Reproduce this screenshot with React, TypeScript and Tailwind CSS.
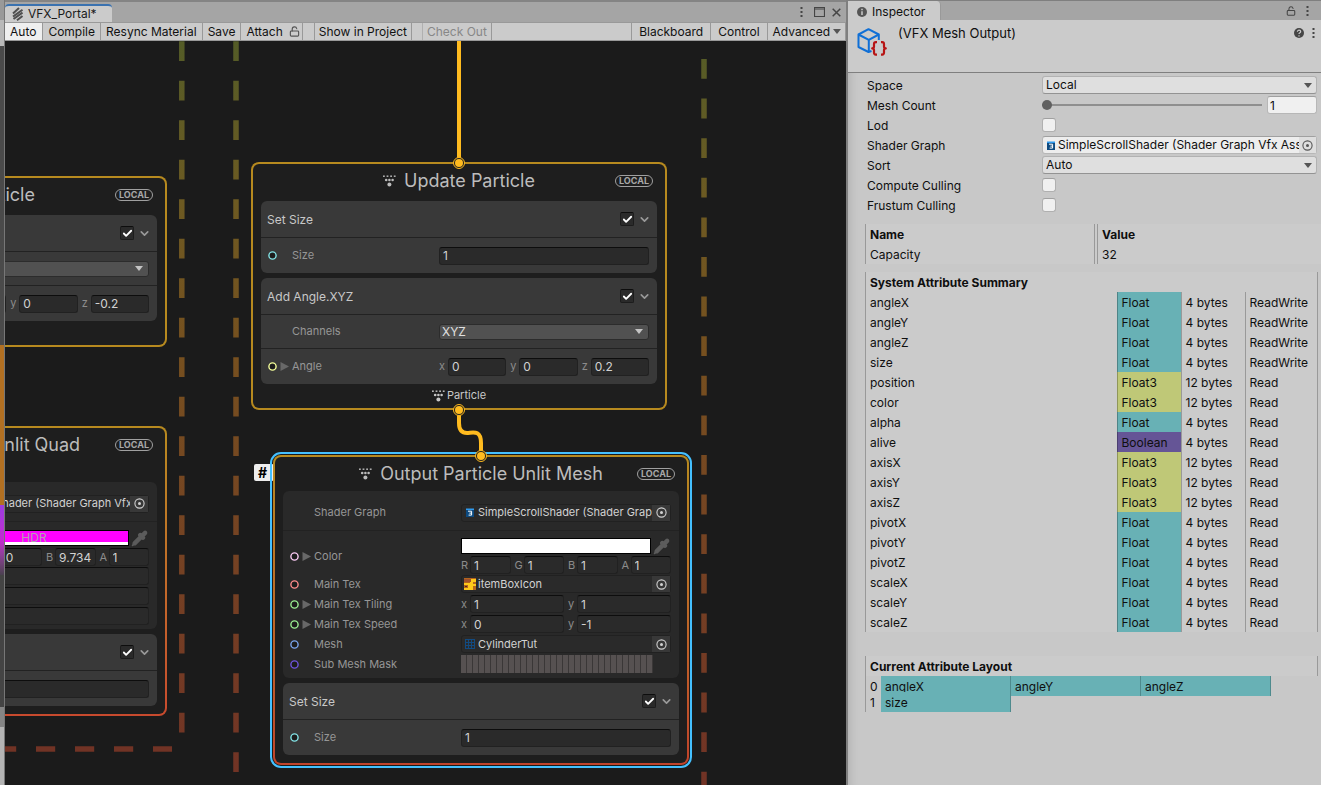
import { useState } from "react";
import { Check, ChevronDown, LockOpen, Pipette } from "lucide-react";

type BlockTone = "light" | "dark";

// ── Icons ─────────────────────────────────────────────────────
function ParticleIcon() {
  return (
    <svg width="13" height="12" viewBox="0 0 13 12" fill="currentColor" className="shrink-0">
      <rect x="0" y="0.5" width="1.8" height="1.4" />
      <rect x="3.6" y="0.5" width="1.8" height="1.4" />
      <rect x="7.2" y="0.5" width="1.8" height="1.4" />
      <rect x="10.8" y="0.5" width="1.8" height="1.4" />
      <circle cx="3.2" cy="5" r="1.3" />
      <circle cx="6.4" cy="5" r="1.3" />
      <circle cx="9.6" cy="5" r="1.3" />
      <circle cx="6.4" cy="9.6" r="2" />
    </svg>
  );
}

function EffectIcon() {
  return (
    <svg width="12" height="14" viewBox="0 0 12 14" stroke="#4f4f4f" strokeWidth="2" fill="none">
      <path d="M1 6.5 7 1" />
      <path d="M1 9.6 10.5 2.8" />
      <path d="M1.5 12 10.5 5.6" />
      <path d="M5 13.2 10.5 9" />
    </svg>
  );
}

function MeshOutputIcon() {
  return (
    <svg width="30" height="30" viewBox="0 0 30 30" fill="none" strokeLinejoin="round">
      <path d="M14.5 24 11.5 25 1.5 20V7.5L11.5 2.2 21.8 7.5V13" stroke="#0f6fd6" strokeWidth="2" />
      <path d="M1.5 7.5 11.8 12.8 21.8 7.5M11.8 12.8V25" stroke="#0f6fd6" strokeWidth="2" />
      <path
        d="M20 15.2h-1.2c-1.3 0-1.8.8-1.8 2v2.4c0 1-.6 1.8-1.8 1.8 1.2 0 1.8.8 1.8 1.8v2.4c0 1.2.5 2 1.8 2H20M24 15.2h1.2c1.3 0 1.8.8 1.8 2v2.4c0 1 .6 1.8 1.8 1.8-1.2 0-1.8.8-1.8 1.8v2.4c0 1.2-.5 2-1.8 2H24"
        stroke="#b71515"
        strokeWidth="2.2"
      />
    </svg>
  );
}

function ShaderIcon() {
  return (
    <svg width="8" height="9" viewBox="0 0 8 9" className="shrink-0">
      <rect x="0" y="1" width="8" height="8" fill="#0d4a80" />
      <rect x="0" y="0.5" width="8" height="1.5" fill="#2f9bf0" />
      <path d="M2 3.2h3.6v3.9H2.6M3.4 5.1h2.2" stroke="#fff" strokeWidth="1" fill="none" />
    </svg>
  );
}

function TextureIcon() {
  return (
    <svg width="12" height="12" viewBox="0 0 12 12" className="shrink-0">
      <rect width="12" height="12" fill="#b5651d" />
      <rect y="1" width="7" height="3" fill="#a0522d" />
      <path d="M0 5h6v2H0zM0 10h7v2H0zM7 1h5v3H9v2h3v2H9v4H6V4h1zM4 7h2v3H4z" fill="#ffc91a" />
      <path d="M1 8h2v1H1z" fill="#5a2a10" />
    </svg>
  );
}

function MeshIcon() {
  return (
    <svg width="10" height="10" viewBox="0 0 10 10" stroke="#124a80" strokeWidth="1" className="shrink-0">
      <path d="M.5 0v10M3.5 0v10M6.5 0v10M9.5 0v10M0 .5h10M0 3.5h10M0 6.5h10M0 9.5h10" />
    </svg>
  );
}

function PickerIcon() {
  return (
    <svg width="11" height="11" viewBox="0 0 11 11">
      <circle cx="5.5" cy="5.5" r="4.6" fill="none" stroke="currentColor" strokeWidth="1.1" />
      <circle cx="5.5" cy="5.5" r="1.5" fill="currentColor" />
    </svg>
  );
}

function DownArrow() {
  return (
    <svg width="8" height="5" viewBox="0 0 8 5" fill="currentColor">
      <path d="M0 0h8L4 5z" />
    </svg>
  );
}

function MoreIcon() {
  return (
    <svg width="3" height="10" viewBox="0 0 3 10" fill="#454545">
      <rect x="0.5" y="0" width="2" height="2" />
      <rect x="0.5" y="4" width="2" height="2" />
      <rect x="0.5" y="8" width="2" height="2" />
    </svg>
  );
}

// ── Node controls ─────────────────────────────────────────────
const fieldCls =
  "block h-[18px] w-full min-w-0 rounded-[3px] border border-[#212121] border-t-[#0d0d0d] bg-[#2a2a2a] px-[3px] text-xs text-[#d2d2d2] outline-none focus:border-[#3a79bb]";

function NumberField({ label, axis, value }: { label: string; axis?: string; value: string }) {
  const [text, setText] = useState(value);
  return (
    <label className="flex min-w-0 flex-1 items-center gap-px">
      {axis && <span className="min-w-2 shrink-0 text-[11px] text-[#8c8c8c]">{axis}</span>}
      <input aria-label={label} className={fieldCls} value={text} onChange={(e) => setText(e.target.value)} />
    </label>
  );
}

function VectorField({ label, axes, values }: { label: string; axes: string[]; values: string[] }) {
  return (
    <div className="flex gap-1">
      {axes.map((axis, i) => (
        <NumberField key={axis} label={`${label} ${axis}`} axis={axis} value={values[i]} />
      ))}
    </div>
  );
}

function ObjectField({ label, name, icon }: { label: string; name: string; icon: React.ReactNode }) {
  return (
    <div className="flex h-[18px] items-center rounded-[3px] border border-[#212121] bg-[#2a2a2a] pl-0.5 text-[#d2d2d2]">
      <span className="flex w-3 shrink-0 justify-center">{icon}</span>
      <span className="ml-0.5 min-w-0 flex-1 overflow-hidden whitespace-nowrap text-[11px]">{name}</span>
      <button
        aria-label={`Pick ${label}`}
        className="flex h-4 w-[18px] shrink-0 items-center justify-center bg-[#383838]"
      >
        <PickerIcon />
      </button>
    </div>
  );
}

function ColorField({ values, hdr }: { values: string[]; hdr?: boolean }) {
  return (
    <div>
      <div className="flex h-[18px] items-start justify-between">
        <button
          aria-label="Color swatch"
          className={
            "h-4 w-[190px] overflow-hidden border border-black text-center text-xs leading-[14px] text-[#b4a0b4] " +
            (hdr ? "bg-[#ff00ff] shadow-[inset_0_-3px_0_#fff]" : "bg-white")
          }
        >
          {hdr ? "HDR" : ""}
        </button>
        <button aria-label="Pick color" className="pr-px text-[#5c5c5c]">
          <Pipette size={17} fill="currentColor" strokeWidth={2} />
        </button>
      </div>
      <VectorField label="Color" axes={["R", "G", "B", "A"]} values={values} />
    </div>
  );
}

function MaskField() {
  return (
    <div className="flex h-[18px] w-48">
      {Array.from({ length: 32 }, (_, i) => (
        <span key={i} className="flex-1 border-r border-[#3a3737] bg-[#565151]" />
      ))}
    </div>
  );
}

function ChannelSelect() {
  return (
    <div className="grid items-center">
      <select
        aria-label="Channels"
        className="col-start-1 row-start-1 h-4 appearance-none rounded-[3px] border border-[#2c2c2c] bg-[#515151] px-0.5 text-xs leading-none text-[#e0e0e0] outline-none"
      >
        <option>XYZ</option>
        <option>XY</option>
      </select>
      <span className="pointer-events-none col-start-1 row-start-1 mr-1.5 justify-self-end text-[#c4c4c4]">
        <DownArrow />
      </span>
    </div>
  );
}

interface RowProps {
  label: string;
  port?: string;
  foldout?: boolean;
  className?: string;
  children: React.ReactNode;
}

function Row({ label, port, foldout, className = "h-5", children }: RowProps) {
  return (
    <div className={`flex items-center pr-2 pl-[7px] ${className}`}>
      <div className="flex w-[171px] shrink-0 items-center text-[11px] text-[#969696]">
        <span className="w-3">
          {port && (
            <svg width="9" height="9" viewBox="0 0 9 9" className="block">
              <circle cx="4.5" cy="4.5" r="3.6" fill="#1c1c1c" stroke={port} strokeWidth="1.4" />
            </svg>
          )}
        </span>
        <span className="w-3">
          {foldout && (
            <svg width="9" height="9" viewBox="0 0 9 9" fill="#686868" className="block">
              <path d="M.5 0v9l8.500-4.500z" />
            </svg>
          )}
        </span>
        {label}
      </div>
      <div className="min-w-0 flex-1">{children}</div>
    </div>
  );
}

function Block({ title, tone = "light", children }: { title?: string; tone?: BlockTone; children: React.ReactNode }) {
  const [on, setOn] = useState(true);
  return (
    <section
      className={
        "divide-y divide-[#222222] rounded-md " + (tone === "light" ? "bg-[#393939]" : "bg-[#292929]")
      }
    >
      {title && (
        <header className="flex h-[37px] items-center gap-1 px-1.5 text-xs text-[#c8c8c8]">
          <h3 className="flex-1 pt-0.5">{title}</h3>
          <span className="grid place-items-center">
            <input
              type="checkbox"
              aria-label={`Enable ${title}`}
              checked={on}
              onChange={() => setOn(!on)}
              className="col-start-1 row-start-1 size-3.5 appearance-none rounded-[2px] border border-[#1c1c1c] border-t-[#0d0d0d] bg-[#2a2a2a]"
            />
            {on && (
              <Check size={11} strokeWidth={4} className="pointer-events-none col-start-1 row-start-1 text-white" />
            )}
          </span>
          <button aria-label={`Collapse ${title}`} className="text-[#9a9a9a]">
            <ChevronDown size={13} strokeWidth={3} />
          </button>
        </header>
      )}
      {children}
    </section>
  );
}

interface NodeProps {
  title: string;
  className: string;
  headerCls?: string;
  output?: string;
  children: React.ReactNode;
}

function ContextNode({ title, className, headerCls = "h-[34px]", output, children }: NodeProps) {
  return (
    <article className={`absolute w-[416px] rounded-lg p-0.5 ${className}`}>
      <div className="rounded-md bg-[#1e1e1e] px-2 pb-2">
        <header className={`relative flex items-start justify-center ${headerCls}`}>
          <h2 className="flex h-[34px] items-center gap-2 text-lg text-[#bcbcbc]">
            <ParticleIcon />
            {title}
          </h2>
          <span className="absolute top-[11px] right-1 flex h-3 w-[38px] items-center justify-center rounded-full border border-[#a0a0a0] text-[9px] font-bold text-[#a8a8a8]">
            LOCAL
          </span>
        </header>
        <div className="flex flex-col gap-[5px]">{children}</div>
        {output && (
          <footer className="-mb-0.5 flex h-[18px] items-end justify-center gap-0.5 text-[11px] leading-[14px] text-[#c8c8c8]">
            <ParticleIcon />
            {output}
          </footer>
        )}
      </div>
    </article>
  );
}

// ── Graph canvas ──────────────────────────────────────────────
function SystemBorders() {
  return (
    <svg className="pointer-events-none absolute inset-0 size-full">
      <defs>
        <linearGradient id="systemBorder" gradientUnits="userSpaceOnUse" x1="0" y1="0" x2="0" y2="735">
          <stop offset="0" stopColor="#545c27" />
          <stop offset="0.22" stopColor="#6d5a22" />
          <stop offset="0.42" stopColor="#76501f" />
          <stop offset="0.7" stopColor="#754223" />
          <stop offset="1" stopColor="#713325" />
        </linearGradient>
      </defs>
      <g fill="none" stroke="url(#systemBorder)" strokeWidth="5.5" strokeDasharray="19.7 19.8">
        <path d="M176.8 0.2V693" />
        <path d="M231 0.2V740" />
        <path d="M699 18V744" strokeDasharray="19.8 19.8" />
      </g>
      <path d="M-8 708H167" stroke="#713325" strokeWidth="5.5" strokeDasharray="19.2 19.8" />
    </svg>
  );
}

function FlowPort({ x, y }: { x: number; y: number }) {
  return (
    <g>
      <circle cx={x} cy={y} r="5.5" fill="#1e1e1e" stroke="#ffbb1f" strokeWidth="1" />
      <circle cx={x} cy={y} r="4" fill="#ffbb1f" />
    </g>
  );
}

function FlowEdges() {
  return (
    <svg className="pointer-events-none absolute inset-0 size-full">
      <g fill="none" stroke="#ffbb1f" strokeWidth="4">
        <path d="M454 0V122" />
        <path d="M454 369V382C454 389 457 392 462 392S476 388 476 402V414" />
      </g>
      <FlowPort x={454} y={122} />
      <FlowPort x={454} y={369} />
      <FlowPort x={476} y={415} />
    </svg>
  );
}

function AngleBlock({ z }: { z: string }) {
  return (
    <Block title="Add Angle.XYZ">
      <Row label="Channels" className="h-[34px]">
        <ChannelSelect />
      </Row>
      <Row label="Angle" port="#f6ff9a" foldout className="h-[35px]">
        <VectorField label="Angle" axes={["x", "y", "z"]} values={["0", "0", z]} />
      </Row>
    </Block>
  );
}

function SizeBlock({ value }: { value: string }) {
  return (
    <Block title="Set Size">
      <Row label="Size" port="#84e4e7" className="h-[35px]">
        <NumberField label="Size" value={value} />
      </Row>
    </Block>
  );
}

function GraphCanvas() {
  return (
    <main className="relative flex-1 overflow-hidden bg-[#1b1b1b]">
      <SystemBorders />

      <ContextNode
        title="Update Particle"
        className="top-[135px] left-[-254px] bg-[#b78a1f]"
        headerCls="h-[37px]"
        output="Particle"
      >
        <AngleBlock z="-0.2" />
      </ContextNode>

      <ContextNode
        title="Output Particle Unlit Quad"
        className="top-[385px] left-[-254px] bg-linear-to-b from-[#b78a1f] to-[#c84a2e]"
        headerCls="h-[54px]"
      >
        <Block tone="dark">
          <Row label="Shader Graph" className="h-10 pt-1">
            <ObjectField label="Shader Graph" name="ParticleShader (Shader Graph Vfx Asset)" icon={<ShaderIcon />} />
          </Row>
          <div className="pt-2 pb-[3px]">
            <Row label="Color" port="#fbcbf4" foldout className="h-9">
              <ColorField hdr values={["9.734", "0", "9.734", "1"]} />
            </Row>
            <Row label="Alpha" port="#84e4e7">
              <NumberField label="Alpha" value="" />
            </Row>
            <Row label="Speed" port="#84e4e7">
              <NumberField label="Speed" value="" />
            </Row>
            <Row label="Scale" port="#84e4e7">
              <NumberField label="Scale" value="" />
            </Row>
          </div>
        </Block>
        <SizeBlock value="" />
      </ContextNode>

      <ContextNode
        title="Update Particle"
        className="top-[121px] left-[246px] bg-[#b78a1f]"
        headerCls="h-[37px]"
        output="Particle"
      >
        <SizeBlock value="1" />
        <AngleBlock z="0.2" />
      </ContextNode>

      <div className="absolute top-[423px] left-[249px] flex h-[17px] w-5 items-center rounded-[2px] bg-[#eeeeee] pl-1 text-sm font-bold text-black">
        #
      </div>
      <ContextNode
        title="Output Particle Unlit Mesh"
        className="top-[414px] left-[268px] bg-linear-to-b from-[#b78a1f] to-[#c0432b] outline-2 outline-offset-1 outline-[#44c0ff]"
      >
        <Block tone="dark">
          <Row label="Shader Graph" className="h-10 pt-1">
            <ObjectField label="Shader Graph" name="SimpleScrollShader (Shader Graph Vfx Asset)" icon={<ShaderIcon />} />
          </Row>
          <div className="pt-[7px] pb-1">
            <Row label="Color" port="#fbcbf4" foldout className="h-9">
              <ColorField values={["1", "1", "1", "1"]} />
            </Row>
            <Row label="Main Tex" port="#ff8b8b">
              <ObjectField label="Main Tex" name="itemBoxIcon" icon={<TextureIcon />} />
            </Row>
            <Row label="Main Tex Tiling" port="#9aef92" foldout>
              <VectorField label="Main Tex Tiling" axes={["x", "y"]} values={["1", "1"]} />
            </Row>
            <Row label="Main Tex Speed" port="#9aef92" foldout>
              <VectorField label="Main Tex Speed" axes={["x", "y"]} values={["0", "-1"]} />
            </Row>
            <Row label="Mesh" port="#7aa5ee">
              <ObjectField label="Mesh" name="CylinderTut" icon={<MeshIcon />} />
            </Row>
            <Row label="Sub Mesh Mask" port="#6e55e0">
              <MaskField />
            </Row>
          </div>
        </Block>
        <SizeBlock value="1" />
      </ContextNode>

      <FlowEdges />
    </main>
  );
}

// ── Graph window chrome ───────────────────────────────────────
const toolCls = "flex items-center whitespace-nowrap border-r border-[#999999] hover:bg-[#dadada]";

function GraphWindow() {
  return (
    <div className="flex min-w-0 flex-1 flex-col border-t-2 border-[#848484] bg-[#a5a5a5]">
      <div className="flex h-5 items-end justify-between">
        <div className="flex h-[18px] w-[107px] items-center gap-1 rounded-t-sm border-t-2 border-[#3a72b0] bg-[#cbcbcb] pl-[7px] text-xs text-[#1a1a1a]">
          <EffectIcon />
          VFX_Portal*
        </div>
        <div className="flex h-5 items-center gap-[7px] pr-[5px]">
          <button aria-label="Window menu" className="mr-1">
            <MoreIcon />
          </button>
          <button aria-label="Maximize">
            <svg width="11" height="10" viewBox="0 0 11 10" className="block">
              <path d="M.5.5h10v9H.5zM.5 2h10" fill="none" stroke="#454545" strokeWidth="1.2" />
            </svg>
          </button>
          <button aria-label="Close">
            <svg width="9" height="9" viewBox="0 0 9 9" className="block">
              <path d="M.7.7 8.3 8.3M8.3.7.7 8.3" stroke="#454545" strokeWidth="1.5" />
            </svg>
          </button>
        </div>
      </div>
      <nav className="flex h-[19px] items-stretch border-y border-[#999999] bg-[#cbcbcb] text-xs text-[#111111]">
        <button className={`${toolCls} bg-[#efefef] px-[5px] pr-[6px]`}>Auto</button>
        <button className={`${toolCls} px-[5px]`}>Compile</button>
        <button className={`${toolCls} px-[5px]`}>Resync Material</button>
        <button className={`${toolCls} px-[5px]`}>Save</button>
        <button className={`${toolCls} gap-1.5 pr-0.5 pl-[5px]`}>
          Attach <LockOpen size={11} strokeWidth={2.5} className="text-[#555555]" />
        </button>
        <span className="w-3 border-r border-[#999999]" />
        <button className={`${toolCls} px-1`}>Show in Project</button>
        <span className="w-[11px] border-r border-[#b0b0b0]" />
        <button className={`${toolCls} px-1 text-[#878787]`} disabled>
          Check Out
        </button>
        <span className="flex-1 border-r border-[#999999]" />
        <button className={`${toolCls} px-[7px]`}>Blackboard</button>
        <button className={`${toolCls} px-[7px]`}>Control</button>
        <button className={`${toolCls} gap-[3px] pr-1 pl-[5px]`}>
          Advanced
          <span className="text-[#555555]">
            <DownArrow />
          </span>
        </button>
      </nav>
      <GraphCanvas />
    </div>
  );
}

// Sliver of the window docked behind the graph
function BackgroundWindow() {
  return (
    <div className="flex w-[5px] shrink-0 flex-col border-r border-[#777777] bg-[#444444]">
      <div className="h-5 bg-[#999999]" />
      <div className="h-[26px] bg-[#b9b9b9]" />
      <div className="h-[299px] bg-[#4a4a4a]" />
      <div className="h-40 bg-[#b27022]" />
      <div className="h-[70px] bg-linear-to-b from-[#9a3be0] via-[#c32ad0] to-[#4a4050]" />
      <div className="h-[132px]" />
      <div className="h-5 bg-[#858585]" />
      <div className="flex-1 bg-[#b4b4b4]" />
    </div>
  );
}

// ── Inspector ─────────────────────────────────────────────────
const attributes = [
  ["angleX", "Float", "4 bytes", "ReadWrite"],
  ["angleY", "Float", "4 bytes", "ReadWrite"],
  ["angleZ", "Float", "4 bytes", "ReadWrite"],
  ["size", "Float", "4 bytes", "ReadWrite"],
  ["position", "Float3", "12 bytes", "Read"],
  ["color", "Float3", "12 bytes", "Read"],
  ["alpha", "Float", "4 bytes", "Read"],
  ["alive", "Boolean", "4 bytes", "Read"],
  ["axisX", "Float3", "12 bytes", "Read"],
  ["axisY", "Float3", "12 bytes", "Read"],
  ["axisZ", "Float3", "12 bytes", "Read"],
  ["pivotX", "Float", "4 bytes", "Read"],
  ["pivotY", "Float", "4 bytes", "Read"],
  ["pivotZ", "Float", "4 bytes", "Read"],
  ["scaleX", "Float", "4 bytes", "Read"],
  ["scaleY", "Float", "4 bytes", "Read"],
  ["scaleZ", "Float", "4 bytes", "Read"],
];

const typeColors: Record<string, string> = {
  Float: "bg-[#68b1b5]",
  Float3: "bg-[#bfc877]",
  Boolean: "bg-[#655596]",
};

function Property({ label, id, children }: { label: string; id: string; children: React.ReactNode }) {
  return (
    <div className="flex h-5 items-center">
      <label htmlFor={id} className="w-[175px] shrink-0">
        {label}
      </label>
      <div className="flex min-w-0 flex-1 items-center pb-0.5">{children}</div>
    </div>
  );
}

function PropertySelect({ id, options }: { id: string; options: string[] }) {
  return (
    <div className="grid flex-1 items-center">
      <select
        id={id}
        className="col-start-1 row-start-1 h-[18px] appearance-none rounded-[3px] border border-[#b2b2b2] border-b-[#939393] bg-[#dfdfdf] px-[3px] text-xs outline-none"
      >
        {options.map((o) => (
          <option key={o}>{o}</option>
        ))}
      </select>
      <span className="pointer-events-none col-start-1 row-start-1 mr-[5px] justify-self-end text-[#555555]">
        <DownArrow />
      </span>
    </div>
  );
}

function PropertyCheck({ id }: { id: string }) {
  return (
    <input
      id={id}
      type="checkbox"
      className="size-3.5 appearance-none rounded-[3px] border border-[#b0b0b0] border-t-[#a0a0a0] bg-[#f0f0f0] checked:bg-[#555555]"
    />
  );
}

const cellCls = "p-0 pt-0.5 pl-1 leading-[18px]";

function Inspector() {
  const [count, setCount] = useState("1");
  return (
    <aside className="flex w-[475px] shrink-0 flex-col border-t border-l-2 border-[#7f7f7f] bg-[#c8c8c8] text-xs text-[#0f0f0f]">
      <div className="flex h-[19px] items-stretch justify-between bg-[#a5a5a5]">
        <div className="flex w-[93px] items-center gap-[5px] rounded-tr-sm border-r border-[#999999] bg-[#cbcbcb] pt-0.5 pl-[9px]">
          <svg width="10" height="10" viewBox="0 0 10 10">
            <circle cx="5" cy="5" r="5" fill="#555555" />
            <path d="M5 4.2V8M5 1.8v1.4" stroke="#cbcbcb" strokeWidth="1.5" />
          </svg>
          Inspector
        </div>
        <div className="flex items-center gap-2.5 pr-3 text-[#454545]">
          <button aria-label="Lock">
            <LockOpen size={10} strokeWidth={2.5} />
          </button>
          <button aria-label="Inspector menu">
            <MoreIcon />
          </button>
        </div>
      </div>

      <header className="flex h-[53px] items-start border-b border-[#7f7f7f] bg-[#cbcbcb] pt-[7px] pr-1.5 pl-[9px]">
        <MeshOutputIcon />
        <h1 className="ml-[11px] flex-1 text-[13px] leading-3">(VFX Mesh Output)</h1>
        <div className="flex items-center gap-2 pt-px">
          <button aria-label="Help">
            <svg width="10" height="10" viewBox="0 0 10 10" className="block">
              <circle cx="5" cy="5" r="5" fill="#454545" />
              <path d="M3.4 3.8c0-2.2 3.3-2 3.3-.1C6.7 4.9 5 4.7 5 6M5 7.2v1.2" stroke="#cbcbcb" strokeWidth="1.2" fill="none" />
            </svg>
          </button>
          <button aria-label="Component menu">
            <MoreIcon />
          </button>
        </div>
      </header>

      <div className="flex-1 pt-[3px] pl-[17px] shadow-[inset_10px_0_8px_-8px_rgba(0,0,0,0.12)]">
        <div className="pr-1 pl-[2px]">
          <Property label="Space" id="space">
            <PropertySelect id="space" options={["Local", "World"]} />
          </Property>
          <Property label="Mesh Count" id="meshCount">
            <input
              id="meshCount"
              type="range"
              min="1"
              max="4"
              value={count}
              onChange={(e) => setCount(e.target.value)}
              className="h-0.5 min-w-0 flex-1 appearance-none bg-[#8f8f8f] [&::-webkit-slider-thumb]:size-2.5 [&::-webkit-slider-thumb]:appearance-none [&::-webkit-slider-thumb]:rounded-full [&::-webkit-slider-thumb]:bg-[#606060]"
            />
            <input
              aria-label="Mesh Count value"
              value={count}
              onChange={(e) => setCount(e.target.value)}
              className="ml-[5px] h-[18px] w-[50px] rounded-[3px] border border-[#b7b7b7] border-t-[#a0a0a0] bg-[#f0f0f0] px-[2px] text-xs outline-none"
            />
          </Property>
          <Property label="Lod" id="lod">
            <PropertyCheck id="lod" />
          </Property>
          <Property label="Shader Graph" id="shaderGraph">
            <div className="flex h-[18px] min-w-0 flex-1 items-center rounded-[3px] border border-[#b7b7b7] border-t-[#a0a0a0] bg-[#ededed] pl-1">
              <ShaderIcon />
              <span className="ml-[3px] min-w-0 flex-1 overflow-hidden whitespace-nowrap">
                SimpleScrollShader (Shader Graph Vfx Asset)
              </span>
              <button
                id="shaderGraph"
                aria-label="Pick Shader Graph"
                className="flex h-4 w-[17px] shrink-0 items-center justify-center bg-[#dedede] text-[#555555]"
              >
                <PickerIcon />
              </button>
            </div>
          </Property>
          <Property label="Sort" id="sort">
            <PropertySelect id="sort" options={["Auto", "Off", "On"]} />
          </Property>
          <Property label="Compute Culling" id="computeCulling">
            <PropertyCheck id="computeCulling" />
          </Property>
          <Property label="Frustum Culling" id="frustumCulling">
            <PropertyCheck id="frustumCulling" />
          </Property>
        </div>

        <table className="mt-2 w-full table-fixed bg-[#cbcbcb] text-left">
          <thead>
            <tr className="h-5">
              <th className={`${cellCls} w-[229px] border-x border-[#999999] font-bold`}>Name</th>
              <th className="w-[3px] border-r border-[#999999] p-0" />
              <th className={`${cellCls} font-bold`}>Value</th>
            </tr>
          </thead>
          <tbody>
            <tr className="h-5">
              <td className={`${cellCls} border-x border-[#999999]`}>Capacity</td>
              <td className="border-r border-[#999999] p-0" />
              <td className={cellCls}>32</td>
            </tr>
          </tbody>
        </table>

        <div className="mt-2 mr-[3px] border-x border-[#999999] bg-[#cbcbcb]">
          <h2 className="h-5 pt-0.5 pl-1 leading-[18px] font-bold">System Attribute Summary</h2>
          <table className="w-full table-fixed">
            <tbody>
              {attributes.map(([name, type, bytes, access]) => (
                <tr key={name} className="h-5">
                  <td className={cellCls}>{name}</td>
                  <td className={`${cellCls} w-16 border-l border-black/25 ${typeColors[type]}`}>{type}</td>
                  <td className={`${cellCls} w-16 border-l border-[#999999]`}>{bytes}</td>
                  <td className={`${cellCls} w-[72px] border-l border-[#999999]`}>{access}</td>
                </tr>
              ))}
            </tbody>
          </table>
        </div>

        <div className="mt-6 mr-[3px]">
          <h2 className="h-5 border-x border-[#999999] bg-[#cbcbcb] pt-0.5 pl-1 leading-[18px] font-bold">
            Current Attribute Layout
          </h2>
          <div className="border-l border-[#999999] leading-[18px]">
            <div className="flex h-4">
              <span className="w-[15px] pt-0.5 pl-1">0</span>
              {["angleX", "angleY", "angleZ"].map((name) => (
                <span key={name} className="h-5 w-[130px] border-r border-[#4e8a8d] bg-[#68b1b5] pt-0.5 pl-1">
                  {name}
                </span>
              ))}
            </div>
            <div className="relative flex h-5">
              <span className="w-[15px] pt-0.5 pl-1">1</span>
              <span className="w-[130px] border-r border-[#4e8a8d] bg-[#68b1b5] pt-0.5 pl-1">size</span>
            </div>
          </div>
        </div>
      </div>
    </aside>
  );
}

export default function App() {
  return (
    <div className="flex min-h-screen bg-[#848484] font-['Inter',sans-serif]">
      <BackgroundWindow />
      <GraphWindow />
      <Inspector />
    </div>
  );
}
